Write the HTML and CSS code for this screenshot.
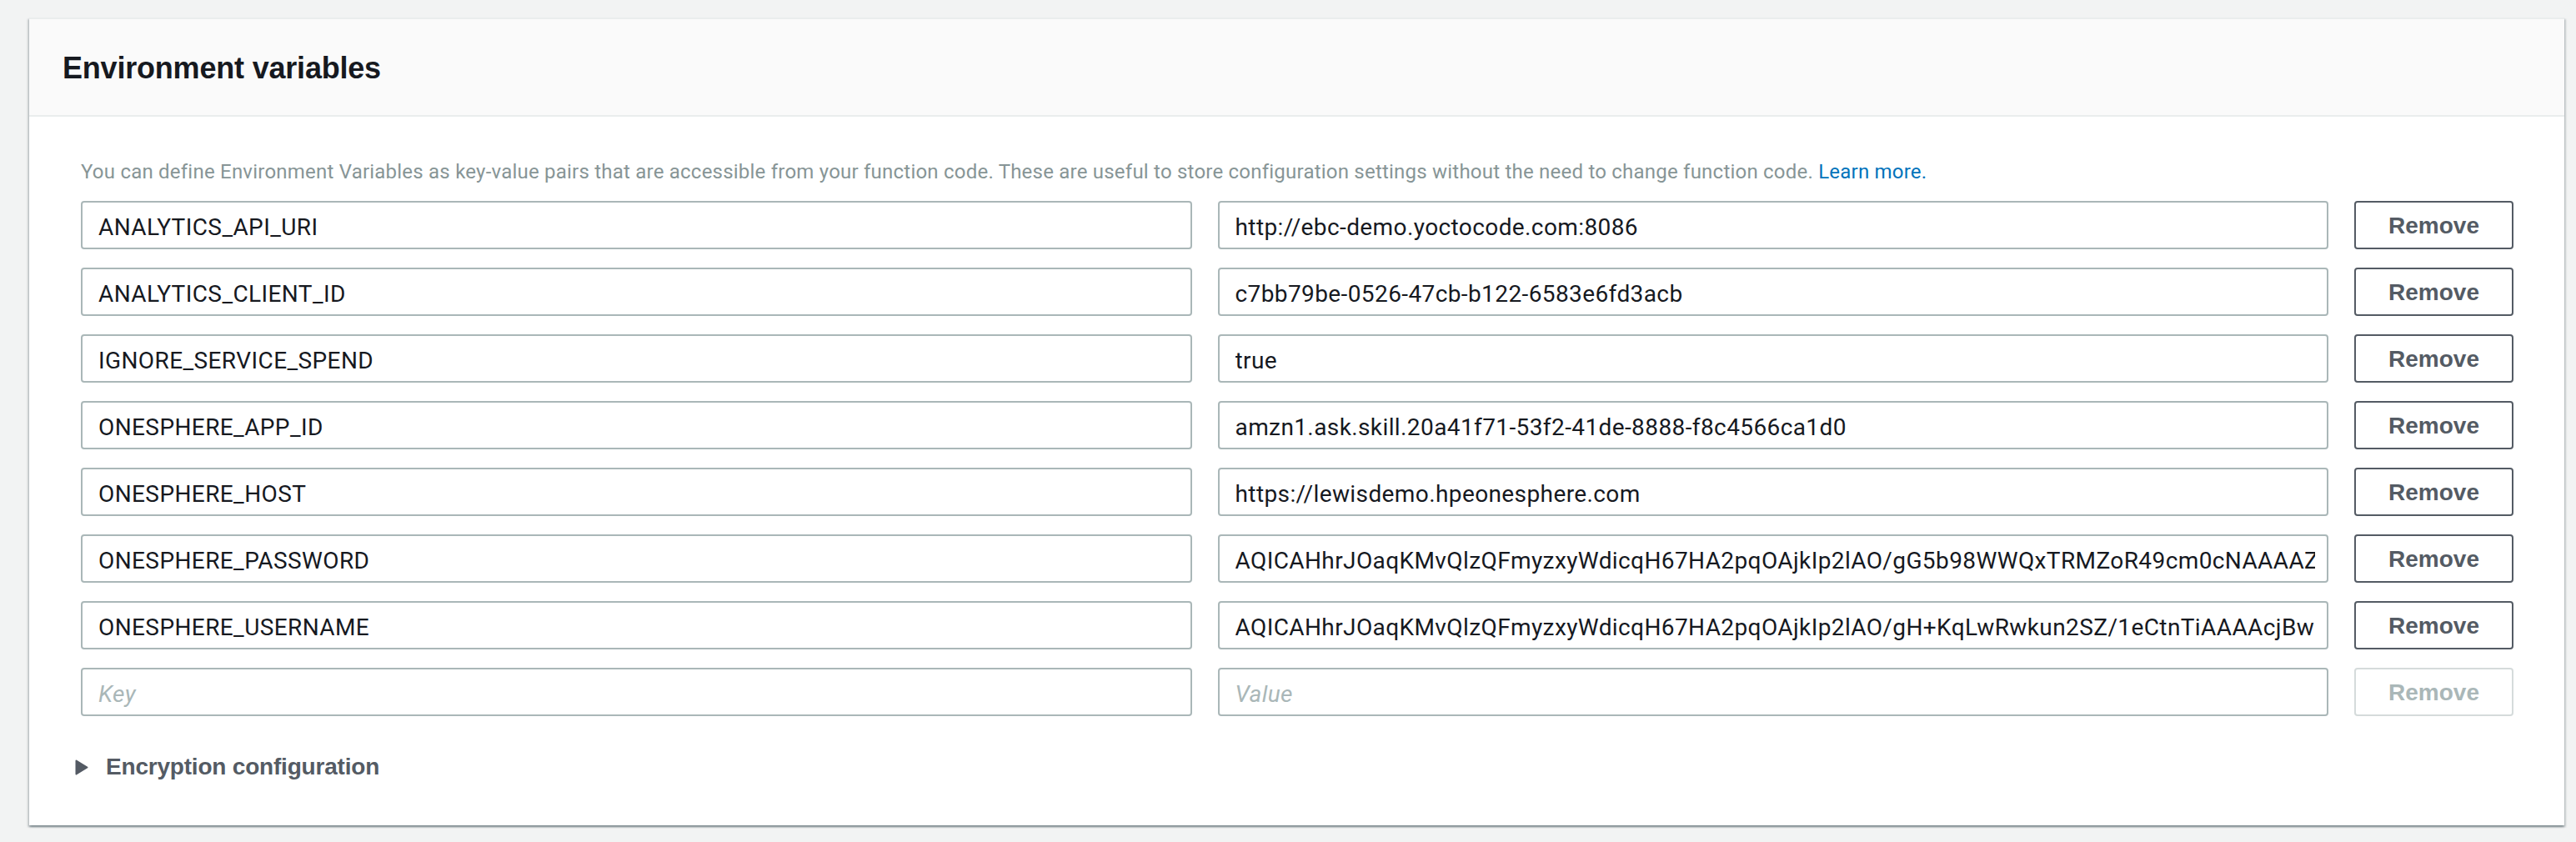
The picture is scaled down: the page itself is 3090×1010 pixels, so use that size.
FILE: index.html
```html
<!DOCTYPE html>
<html lang="en">
<head>
<meta charset="utf-8">
<title>Environment variables</title>
<link rel="stylesheet" href="styles.css">
</head>
<body>
<section class="card">
  <header class="card-header">
    <h2 class="card-title">Environment variables</h2>
  </header>
  <div class="card-body">
    <p class="desc">You can define Environment Variables as key-value pairs that are accessible from your function code. These are useful to store configuration settings without the need to change function code. <a class="link" href="#">Learn more.</a></p>
    <div class="vars">
      <div class="field"><span class="field-text">ANALYTICS_API_URI</span></div>
      <div class="field"><span class="field-text">http://ebc-demo.yoctocode.com:8086</span></div>
      <button class="btn" type="button">Remove</button>

      <div class="field"><span class="field-text">ANALYTICS_CLIENT_ID</span></div>
      <div class="field"><span class="field-text">c7bb79be-0526-47cb-b122-6583e6fd3acb</span></div>
      <button class="btn" type="button">Remove</button>

      <div class="field"><span class="field-text">IGNORE_SERVICE_SPEND</span></div>
      <div class="field"><span class="field-text">true</span></div>
      <button class="btn" type="button">Remove</button>

      <div class="field"><span class="field-text">ONESPHERE_APP_ID</span></div>
      <div class="field"><span class="field-text">amzn1.ask.skill.20a41f71-53f2-41de-8888-f8c4566ca1d0</span></div>
      <button class="btn" type="button">Remove</button>

      <div class="field"><span class="field-text">ONESPHERE_HOST</span></div>
      <div class="field"><span class="field-text">https://lewisdemo.hpeonesphere.com</span></div>
      <button class="btn" type="button">Remove</button>

      <div class="field"><span class="field-text">ONESPHERE_PASSWORD</span></div>
      <div class="field"><span class="field-text">AQICAHhrJOaqKMvQlzQFmyzxyWdicqH67HA2pqOAjkIp2lAO/gG5b98WWQxTRMZoR49cm0cNAAAAZjBkBgkqhkiG9w0BBwagVzBVAgEAMFAGCSqGSIb3DQEHATAeBglghkgBZQMEAS4wEQQM</span></div>
      <button class="btn" type="button">Remove</button>

      <div class="field"><span class="field-text">ONESPHERE_USERNAME</span></div>
      <div class="field"><span class="field-text">AQICAHhrJOaqKMvQlzQFmyzxyWdicqH67HA2pqOAjkIp2lAO/gH+KqLwRwkun2SZ/1eCtnTiAAAAcjBwBgkqhkiG9w0BBwagYzBhAgEAMFwGCSqGSIb3DQEHATAeBglghkgBZQ</span></div>
      <button class="btn" type="button">Remove</button>

      <div class="field"><span class="field-text placeholder">Key</span></div>
      <div class="field"><span class="field-text placeholder">Value</span></div>
      <button class="btn btn-disabled" type="button" disabled>Remove</button>
    </div>
    <div class="expander">
      <svg class="caret" width="16" height="19" viewBox="0 0 16 19" aria-hidden="true">
        <path d="M1.5 1.5 L14.5 9.5 L1.5 17.5 Z" fill="#545b64" stroke="#545b64" stroke-width="2" stroke-linejoin="round"/>
      </svg>
      <span class="expander-label">Encryption configuration</span>
    </div>
  </div>
</section>
</body>
</html>
```

FILE: styles.css
```css
html, body {
  margin: 0;
  padding: 0;
}

body {
  background: #f2f3f3;
  padding: 21px 14px 20px 35px;
  font-family: Roboto, "Liberation Sans", Arial, sans-serif;
  color: #16191f;
}

.card {
  background: #ffffff;
  border-top: 2px solid #eaeded;
  box-shadow: 0 2px 2px 0 rgba(0, 28, 36, 0.3),
              2px 2px 2px 0 rgba(0, 28, 36, 0.15),
              -2px 2px 2px 0 rgba(0, 28, 36, 0.15);
}

.card-header {
  background: #fafafa;
  border-bottom: 2px solid #eaeded;
  padding: 37px 40px 34px 40px;
}

.card-title {
  margin: 0;
  font-family: "Liberation Sans", Arial, sans-serif;
  font-weight: 700;
  font-size: 36px;
  line-height: 44px;
  color: #16191f;
  letter-spacing: -0.2px;
}

.card-body {
  padding: 50px 61px 50px 62px;
}

.desc {
  margin: 0 0 19px 0;
  font-size: 24px;
  line-height: 32px;
  color: #879596;
  white-space: nowrap;
  letter-spacing: 0.22px;
}

.link {
  color: #0073bb;
  text-decoration: none;
}

.vars {
  display: grid;
  grid-template-columns: 1fr 1fr 191px;
  column-gap: 31px;
  row-gap: 22px;
}

.field {
  box-sizing: border-box;
  height: 58px;
  border: 2px solid #aab7b8;
  border-radius: 4px;
  background: #ffffff;
  padding: 6px 14px 0 19px;
  min-width: 0;
}

.field-text {
  display: block;
  overflow: hidden;
  white-space: nowrap;
  font-size: 28px;
  line-height: 48px;
  color: #16191f;
  letter-spacing: 0.4px;
}

.placeholder {
  font-style: italic;
  color: #aab7b8;
}

.btn {
  box-sizing: border-box;
  height: 58px;
  margin: 0;
  border: 2px solid #545b64;
  border-radius: 4px;
  background: #ffffff;
  padding: 2px 0 0 0;
  font-family: "Liberation Sans", Arial, sans-serif;
  font-weight: 700;
  font-size: 28px;
  line-height: 52px;
  color: #545b64;
  text-align: center;
}

.btn-disabled {
  border-color: #d5dbdb;
  color: #aab7b8;
}

.expander {
  display: flex;
  align-items: center;
  height: 40px;
  margin: 41px 0 0 -7px;
}

.caret {
  display: block;
  flex: none;
}

.expander-label {
  margin-left: 21px;
  font-family: "Liberation Sans", Arial, sans-serif;
  font-weight: 700;
  font-size: 28px;
  line-height: 40px;
  color: #545b64;
  letter-spacing: -0.2px;
}
```
